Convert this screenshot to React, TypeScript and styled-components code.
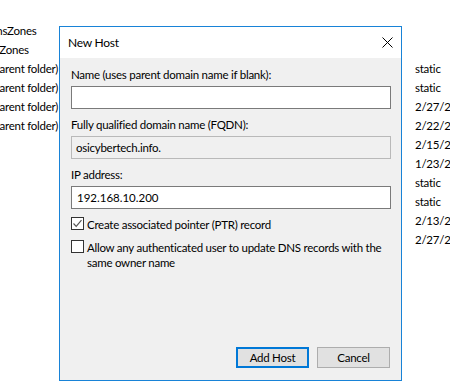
import React from "react";
import styled, { createGlobalStyle } from "styled-components";

const Global = createGlobalStyle`
  html, body { margin: 0; padding: 0; background: #ffffff; overflow: hidden; }
  body {
    width: 450px;
    height: 392px;
    font-family: "Segoe UI", Lato, "Noto Sans", sans-serif;
    font-size: 11.5px;
    letter-spacing: -0.25px;
    color: #000000;
  }
`;

const Screen = styled.div`
  position: relative;
  width: 450px;
  height: 392px;
  overflow: hidden;
  background: #ffffff;
`;

const RecordList = styled.div`
  display: grid;
  grid-template-columns: 465px 200px;
  grid-auto-rows: 19px;
  align-items: center;
  padding-top: 21px;
  margin-left: -50px;
`;

const Cell = styled.div`
  white-space: nowrap;
  overflow: hidden;
  line-height: 19px;
`;

const Dialog = styled.div`
  position: absolute;
  left: 59px;
  top: 26px;
  width: 343px;
  height: 355px;
  box-sizing: border-box;
  border: 1px solid #1883d7;
  background: #f0f0f0;
  display: flex;
  flex-direction: column;
`;

const TitleBar = styled.div`
  height: 31px;
  flex: none;
  background: #ffffff;
  display: flex;
  align-items: center;
  justify-content: space-between;
  padding-left: 8px;
`;

const Title = styled.span`
  font-size: 12px;
  line-height: 16px;
`;

const CloseButton = styled.div`
  width: 28px;
  height: 31px;
  display: flex;
  align-items: center;
  justify-content: center;
`;

const Body = styled.div`
  flex: 1;
  display: flex;
  flex-direction: column;
  gap: 8px;
  padding: 9px 9px 0 11px;
`;

const Field = styled.div`
  display: flex;
  flex-direction: column;
  gap: 3px;
`;

const Label = styled.div`
  line-height: 16px;
  white-space: nowrap;
`;

const TextBox = styled.div<{ $disabled?: boolean; $spaced?: boolean }>`
  height: 23px;
  width: 320px;
  box-sizing: border-box;
  border: 1px solid ${(p) => (p.$disabled ? "#b9b9b9" : "#7a7a7a")};
  background: ${(p) => (p.$disabled ? "#f0f0f0" : "#ffffff")};
  padding: 0 ${(p) => (p.$spaced ? "5px" : "4px")};
  display: flex;
  align-items: center;
  line-height: 16px;
  white-space: nowrap;
  letter-spacing: ${(p) => (p.$spaced ? "0px" : "-0.25px")};
`;

const CheckRow = styled.div`
  display: flex;
  align-items: flex-start;
  gap: 3px;
  line-height: 15px;
`;

const Box = styled.div`
  width: 13px;
  height: 13px;
  flex: none;
  box-sizing: border-box;
  border: 1px solid #333333;
  background: #ffffff;
  display: flex;
  align-items: center;
  justify-content: center;
`;

const CheckText = styled.div`
  width: 304px;
`;

const Footer = styled.div`
  flex: none;
  display: flex;
  justify-content: flex-end;
  gap: 8px;
  padding: 0 11px 12px 0;
`;

const Button = styled.div<{ $default?: boolean }>`
  width: 73px;
  height: 21px;
  box-sizing: border-box;
  background: #e1e1e1;
  border: ${(p) => (p.$default ? "2px solid #0078d7" : "1px solid #adadad")};
  display: flex;
  align-items: center;
  justify-content: center;
  line-height: 16px;
`;

const rows: [string, string][] = [
  ["DomainDnsZones", ""],
  ["ForestDnsZones", ""],
  ["(same as parent folder)", "static"],
  ["(same as parent folder)", "static"],
  ["(same as parent folder)", "2/27/2019 9:00:00 AM"],
  ["(same as parent folder)", "2/22/2019 2:00:00 PM"],
  ["", "2/15/2019 11:00:00 AM"],
  ["", "1/23/2019 4:00:00 PM"],
  ["", "static"],
  ["", "static"],
  ["", "2/13/2019 10:00:00 AM"],
  ["", "2/27/2019 9:00:00 AM"],
];

export default function App() {
  return (
    <>
      <Global />
      <Screen>
        <RecordList>
          {rows.map(([name, stamp], i) => (
            <React.Fragment key={i}>
              <Cell>{name}</Cell>
              <Cell>{stamp}</Cell>
            </React.Fragment>
          ))}
        </RecordList>
        <Dialog>
          <TitleBar>
            <Title>New Host</Title>
            <CloseButton>
              <svg width="11" height="11" viewBox="0 0 11 11">
                <path d="M0.5 0.5 L10.5 10.5 M10.5 0.5 L0.5 10.5" stroke="#000" strokeWidth="1" fill="none" />
              </svg>
            </CloseButton>
          </TitleBar>
          <Body>
            <Field>
              <Label>Name (uses parent domain name if blank):</Label>
              <TextBox />
            </Field>
            <Field>
              <Label>Fully qualified domain name (FQDN):</Label>
              <TextBox $disabled>osicybertech.info.</TextBox>
            </Field>
            <Field>
              <Label>IP address:</Label>
              <TextBox $spaced>192.168.10.200</TextBox>
            </Field>
            <CheckRow>
              <Box>
                <svg width="11" height="11" viewBox="0 0 11 11">
                  <path d="M1.5 5.5 L4.2 8.3 L9.5 2.2" stroke="#555" strokeWidth="1.2" fill="none" />
                </svg>
              </Box>
              <CheckText>Create associated pointer (PTR) record</CheckText>
            </CheckRow>
            <CheckRow>
              <Box />
              <CheckText>Allow any authenticated user to update DNS records with the same owner name</CheckText>
            </CheckRow>
          </Body>
          <Footer>
            <Button $default>Add Host</Button>
            <Button>Cancel</Button>
          </Footer>
        </Dialog>
      </Screen>
    </>
  );
}
